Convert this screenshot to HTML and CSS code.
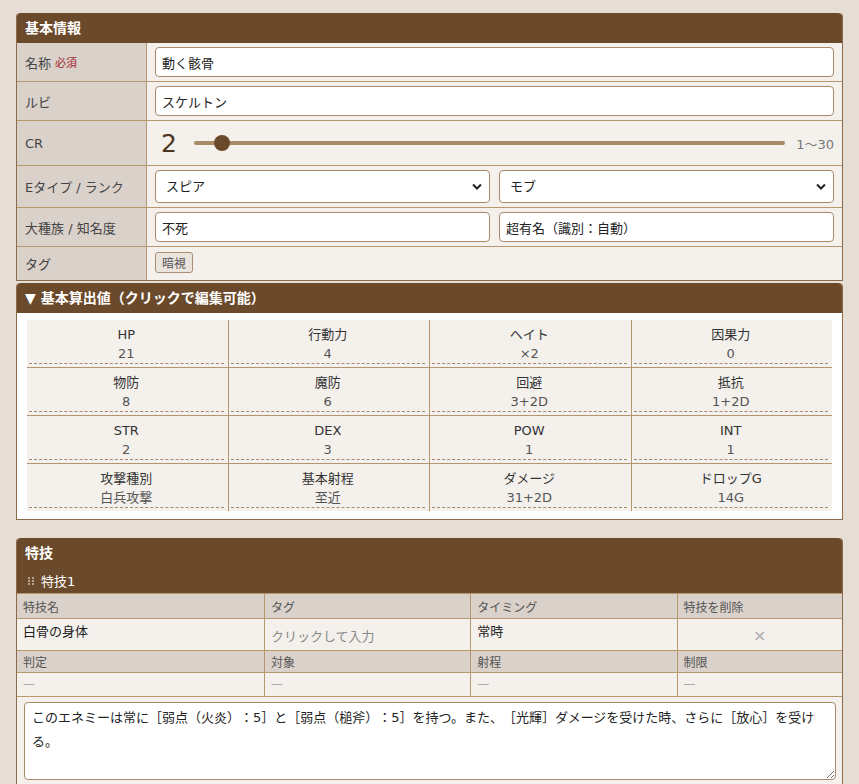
FILE: index.html
```html
<!DOCTYPE html>
<html lang="ja">
<head>
    <meta charset="UTF-8">
    <meta name="viewport" content="width=device-width, initial-scale=1.0">
    <title>エネミー編集</title>
    <link rel="stylesheet" href="styles.css">
</head>
<body>
    <div class="page">
        <!-- 基本情報 -->
        <section class="panel">
            <h2 class="panel-head">基本情報</h2>
            <div class="form-row">
                <div class="form-label">名称 <span class="req">必須</span></div>
                <div class="form-value"><input class="text-input" type="text" value="動く骸骨"></div>
            </div>
            <div class="form-row">
                <div class="form-label">ルビ</div>
                <div class="form-value"><input class="text-input" type="text" value="スケルトン"></div>
            </div>
            <div class="form-row">
                <div class="form-label">CR</div>
                <div class="form-value cr-row">
                    <span class="cr-num">2</span>
                    <input class="cr-slider" type="range" min="1" max="30" value="2">
                    <span class="cr-range">1～30</span>
                </div>
            </div>
            <div class="form-row">
                <div class="form-label">Eタイプ / ランク</div>
                <div class="form-value">
                    <div class="select-wrap">
                        <select class="select-input">
                            <option>スピア</option>
                            <option>シールド</option>
                            <option>アタッカー</option>
                        </select>
                        <svg class="chevron" width="10" height="7" viewBox="0 0 10 7"><path d="M1 1.5 L5 5.5 L9 1.5" fill="none" stroke="#222" stroke-width="2"/></svg>
                    </div>
                    <div class="select-wrap">
                        <select class="select-input">
                            <option>モブ</option>
                            <option>ボス</option>
                        </select>
                        <svg class="chevron" width="10" height="7" viewBox="0 0 10 7"><path d="M1 1.5 L5 5.5 L9 1.5" fill="none" stroke="#222" stroke-width="2"/></svg>
                    </div>
                </div>
            </div>
            <div class="form-row">
                <div class="form-label">大種族 / 知名度</div>
                <div class="form-value">
                    <input class="text-input" type="text" value="不死">
                    <input class="text-input" type="text" value="超有名（識別：自動）">
                </div>
            </div>
            <div class="form-row">
                <div class="form-label">タグ</div>
                <div class="form-value tag-row"><button class="tag-btn" type="button">暗視</button></div>
            </div>
        </section>

        <!-- 基本算出値 -->
        <section class="panel stats-panel">
            <h2 class="panel-head">▼ 基本算出値（クリックで編集可能）</h2>
            <div class="stats-body">
                <div class="stat-grid" id="statGrid"></div>
            </div>
        </section>

        <!-- 特技 -->
        <section class="panel skills-panel">
            <h2 class="panel-head">特技</h2>
            <div class="skill-head">
                <svg class="grip" width="6" height="8" viewBox="0 0 6 8">
                    <rect x="0" y="0" width="2" height="2"/><rect x="4" y="0" width="2" height="2"/>
                    <rect x="0" y="3" width="2" height="2"/><rect x="4" y="3" width="2" height="2"/>
                    <rect x="0" y="6" width="2" height="2"/><rect x="4" y="6" width="2" height="2"/>
                </svg>
                特技1
            </div>
            <table class="skill-table">
                <colgroup>
                    <col style="width: 30%"><col style="width: 25%"><col style="width: 25%"><col style="width: 20%">
                </colgroup>
                <tr class="label-row first">
                    <td>特技名</td><td>タグ</td><td>タイミング</td><td>特技を削除</td>
                </tr>
                <tr class="value-row first">
                    <td class="skill-name">白骨の身体</td>
                    <td><span class="placeholder">クリックして入力</span></td>
                    <td class="skill-name">常時</td>
                    <td class="delete-cell">×</td>
                </tr>
                <tr class="label-row second">
                    <td>判定</td><td>対象</td><td>射程</td><td>制限</td>
                </tr>
                <tr class="value-row second">
                    <td class="dash">—</td><td class="dash">—</td><td class="dash">—</td><td class="dash">—</td>
                </tr>
                <tr>
                    <td class="text-cell" colspan="4"><textarea class="skill-text">このエネミーは常に［弱点（火炎）：5］と［弱点（槌斧）：5］を持つ。また、［光輝］ダメージを受けた時、さらに［放心］を受ける。</textarea></td>
                </tr>
            </table>
        </section>
    </div>

    <script>
        // 基本算出値
        const stats = [
            { label: "HP", value: "21" },
            { label: "行動力", value: "4" },
            { label: "ヘイト", value: "×2" },
            { label: "因果力", value: "0" },
            { label: "物防", value: "8" },
            { label: "魔防", value: "6" },
            { label: "回避", value: "3+2D" },
            { label: "抵抗", value: "1+2D" },
            { label: "STR", value: "2" },
            { label: "DEX", value: "3" },
            { label: "POW", value: "1" },
            { label: "INT", value: "1" },
            { label: "攻撃種別", value: "白兵攻撃" },
            { label: "基本射程", value: "至近" },
            { label: "ダメージ", value: "31+2D" },
            { label: "ドロップG", value: "14G" }
        ];

        const grid = document.getElementById('statGrid');
        stats.forEach(stat => {
            const cell = document.createElement('div');
            cell.className = 'stat';
            cell.innerHTML = `<div class="stat-inner"><div class="stat-label">${stat.label}</div><div class="stat-value">${stat.value}</div></div>`;
            grid.appendChild(cell);
        });
    </script>
</body>
</html>
```

FILE: styles.css
```css
/* General Styling */
body {
    margin: 0;
    background: #e6ddd4;
    font-family: "DejaVu Sans", "Noto Sans CJK JP", sans-serif;
    font-size: 13px;
    color: #333;
    text-spacing-trim: space-all;
}
.page {
    padding: 13px 16px;
}
.panel {
    background: #f4f0ec;
    border: 1px solid #8a6a4a;
    border-top: none;
    border-radius: 4px 4px 0 0;
}
.panel-head {
    margin: 0;
    height: 30px;
    line-height: 30px;
    padding: 0 8px;
    background: #6b4a2b;
    color: #fff;
    font-size: 14px;
    font-weight: bold;
    border-radius: 4px 4px 0 0;
}

/* Form rows */
.form-row {
    display: grid;
    grid-template-columns: 130px 1fr;
    border-bottom: 1px solid #b8976f;
}
.form-row:last-child {
    border-bottom: none;
}
.form-label {
    display: flex;
    align-items: center;
    box-sizing: border-box;
    padding: 0 8px;
    background: #d9d1ca;
    border-right: 1px solid #b8976f;
    color: #444;
}
.req {
    margin-left: 4px;
    font-size: 11px;
    color: #a3262a;
}
.form-value {
    display: flex;
    align-items: center;
    gap: 9px;
    padding: 4px 8px;
}
.text-input, .select-input {
    flex: 1;
    min-width: 0;
    box-sizing: border-box;
    height: 30px;
    padding: 0 6px;
    border: 1px solid #a88a68;
    border-radius: 4px;
    background: #fff;
    font-family: inherit;
    font-size: 13px;
    color: #222;
}
.select-wrap {
    position: relative;
    flex: 1;
    display: flex;
}
.select-input {
    height: 33px;
    padding: 0 10px;
    -webkit-appearance: none;
    appearance: none;
}
.chevron {
    position: absolute;
    right: 8px;
    top: 13px;
    pointer-events: none;
}

/* CR slider */
.cr-row {
    height: 36px;
    gap: 0;
}
.cr-num {
    margin-left: 6px;
    font-size: 25px;
    color: #4b3521;
}
.cr-slider {
    flex: 1;
    margin: 0 11px 0 17px;
    height: 16px;
    background: transparent;
    -webkit-appearance: none;
    appearance: none;
}
.cr-slider::-webkit-slider-runnable-track {
    height: 4px;
    border-radius: 2px;
    background: #a88a65;
}
.cr-slider::-webkit-slider-thumb {
    -webkit-appearance: none;
    width: 16px;
    height: 16px;
    margin-top: -6px;
    border: none;
    border-radius: 50%;
    background: #6b4a2b;
}
.cr-range {
    color: #777;
}

/* Tags */
.tag-row {
    padding: 5px 8px 7px;
}
.tag-btn {
    height: 21px;
    padding: 0 6px;
    border: 1px solid #a89078;
    border-radius: 3px;
    background: #ebe4dd;
    font-family: inherit;
    font-size: 12px;
    color: #555;
}

/* Stats */
.stats-panel {
    margin-top: 2px;
}
.stats-body {
    padding: 7px 10px 8px;
    background: #fff;
}
.stat-grid {
    display: grid;
    grid-template-columns: repeat(4, 1fr);
    gap: 1px;
    background: #b39572;
}
.stat {
    padding: 5px 4px 3px 2px;
    background: #f4f0ec;
    text-align: center;
}
.stat-inner {
    border-bottom: 1px dashed #a38b70;
}
.stat-label {
    line-height: 20px;
    color: #333;
}
.stat-value {
    line-height: 18px;
    color: #555;
}

/* Skills */
.skills-panel {
    margin-top: 18px;
}
.skill-head {
    display: flex;
    align-items: center;
    gap: 7px;
    height: 25px;
    padding: 0 11px;
    background: #6b4a2b;
    color: #fff;
    font-size: 13px;
}
.grip {
    fill: #b5a48e;
}
.skill-table {
    width: 100%;
    border-collapse: collapse;
    table-layout: fixed;
}
.skill-table td {
    border: 1px solid #b8976f;
    padding: 0 6px;
}
.skill-table tr td:first-child {
    border-left: none;
}
.skill-table tr td:last-child {
    border-right: none;
}
.label-row td {
    background: #d9d1ca;
    font-size: 12px;
    color: #555;
}
.label-row.first td {
    height: 24px;
}
.label-row.second td {
    height: 21px;
}
.value-row td {
    background: #f4f0ec;
    vertical-align: top;
}
.value-row.first td {
    height: 30px;
    padding-top: 3px;
    box-sizing: border-box;
}
.skill-name {
    line-height: 20px;
    color: #222;
}
.placeholder {
    display: block;
    padding-top: 5px;
    line-height: 20px;
    color: #888;
}
.delete-cell {
    text-align: center;
    font-size: 16px;
    line-height: 28px;
    color: #aaa;
}
.value-row.second td.dash {
    height: 23px;
    line-height: 23px;
    font-size: 12px;
    color: #aaa;
}
.text-cell {
    padding: 5px 6px 4px 7px !important;
    border-bottom: none !important;
    background: #f4f0ec;
}
.skill-text {
    display: block;
    box-sizing: border-box;
    width: 100%;
    height: 78px;
    padding: 3px 14px 3px 7px;
    border: 1px solid #a88a68;
    border-radius: 4px;
    background: #fff;
    font-family: inherit;
    font-size: 13px;
    line-height: 24px;
    color: #222;
}
```
